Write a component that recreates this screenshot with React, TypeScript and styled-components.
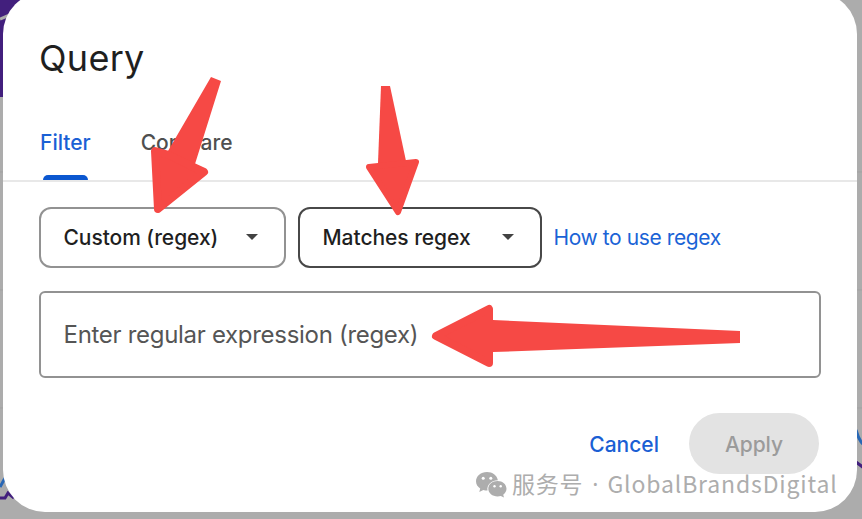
import React from "react";
import styled, { createGlobalStyle } from "styled-components";

const GlobalStyle = createGlobalStyle`
  * { box-sizing: border-box; }
  body { margin: 0; overflow: hidden; font-family: Inter, Roboto, sans-serif; }
  button { font-family: inherit; background: none; border: 0; padding: 0; margin: 0; }
`;

const Page = styled.div`
  position: relative;
  width: 862px;
  height: 519px;
  overflow: hidden;
  background: #acacac;
`;

const Overlay = styled.svg`
  position: absolute;
  inset: 0;
  pointer-events: none;
`;

const Dialog = styled.section`
  position: relative;
  width: 854px;
  height: 520px;
  margin: -8px 0 0 3px;
  padding-top: 44px;
  border-radius: 42px;
  background: #fff;
`;

const Title = styled.h1`
  margin: 0;
  padding-left: 36px;
  height: 44px;
  font-size: 36px;
  line-height: 44px;
  font-weight: 400;
  letter-spacing: 0.3px;
  color: #1f1f1f;
`;

const Tabs = styled.nav`
  display: flex;
  gap: 50px;
  height: 102px;
  padding: 47px 37px 0;
  border-bottom: 2px solid #e8e8e8;
`;

const Tab = styled.button<{ $active?: boolean }>`
  display: flex;
  flex-direction: column;
  align-items: center;
  justify-content: space-between;
  font-size: 21px;
  line-height: 32px;
  font-weight: 500;
  letter-spacing: ${(p) => (p.$active ? "0px" : "0px")};
  color: ${(p) => (p.$active ? "#1a60d5" : "#4f4f4f")};
  &::after {
    content: "";
    width: 45px;
    height: 5px;
    border-radius: 5px 5px 0 0;
    background: ${(p) => (p.$active ? "#0b57d0" : "transparent")};
  }
`;

const Filters = styled.div`
  display: flex;
  align-items: center;
  gap: 12px;
  padding: 24.500px 36px 0 35.500px;
`;

const Select = styled.button<{ $width: number; $strong?: boolean; $tracking: number }>`
  display: flex;
  align-items: center;
  justify-content: space-between;
  width: ${(p) => p.$width}px;
  height: 61.500px;
  padding: 0 26px 0 23px;
  border: 2px solid ${(p) => (p.$strong ? "#484848" : "#929292")};
  border-radius: 12px;
  font-size: 21px;
  font-weight: 500;
  white-space: nowrap;
  letter-spacing: ${(p) => p.$tracking}px;
  color: #1f1f1f;
`;

const HelpLink = styled.a`
  padding-top: 1px;
  font-size: 21px;
  line-height: 30px;
  letter-spacing: -0.4px;
  white-space: nowrap;
  color: #1a63d6;
`;

const Input = styled.input`
  display: block;
  width: 782px;
  height: 87px;
  margin: 23px 0 0 35.500px;
  padding: 0 23px;
  border: 2px solid #929292;
  border-radius: 6px;
  outline: 0;
  font: 400 24px Inter, sans-serif;
  letter-spacing: -0.3px;
  &::placeholder { color: #555; opacity: 1; }
`;

const Actions = styled.footer`
  display: flex;
  justify-content: flex-end;
  align-items: center;
  gap: 30px;
  padding: 35px 38px 0 0;
`;

const Action = styled.button<{ $filled?: boolean }>`
  height: 61px;
  width: ${(p) => (p.$filled ? "130px" : "auto")};
  border-radius: 31px;
  padding-top: 2px;
  background: ${(p) => (p.$filled ? "#e3e3e3" : "transparent")};
  color: ${(p) => (p.$filled ? "#9b9b9b" : "#1a5fd4")};
  font-size: 21px;
  font-weight: 500;
  letter-spacing: ${(p) => (p.$filled ? "-0.1px" : "0px")};
`;

const Watermark = styled.div`
  position: absolute;
  left: 476px;
  top: 470px;
  display: flex;
  align-items: center;
  height: 30px;
  color: #adadad;
  white-space: nowrap;
  font: 400 23px/30px "Noto Sans CJK SC", sans-serif;
`;

const Account = styled.span`
  margin: -4px 0 0 5px;
  letter-spacing: 0.8px;
`;

const Dot = styled.span`
  width: 24px;
  margin-top: -2px;
  text-align: center;
  font-family: "Noto Sans", sans-serif;
`;

const Brand = styled.span`
  margin-top: -4px;
  letter-spacing: 0.85px;
`;

const Caret = () => (
  <svg width="12" height="6" viewBox="0 0 12 6"><path d="M0 0h12L6 6z" fill="#424242" /></svg>
);

const ChatIcon = () => (
  <svg width="31" height="26" viewBox="0 0 31 26">
    <path fill="#adadad" d="M11 0C4.8 0 0 4.2 0 9.3c0 3 1.7 5.6 4.2 7.3L3.3 20l4-2.1c1.3.4 2.7.6 4.2.6-1-6 4.2-10.3 10.4-10.3C20.900 3.300 16.500 0 11 0Z" />
    <path fill="#adadad" d="M21.600 9c-5.200 0-9.300 3.400-9.300 7.700s4.100 7.700 9.300 7.700c1.100 0 2.200-.2 3.200-.5l3.200 1.700-.8-2.900c2-1.400 3.300-3.600 3.300-6 0-4.300-3.900-7.700-8.900-7.700Z" />
    <g fill="#fff">
      <circle cx="7.200" cy="6.300" r="1.500" /><circle cx="14.800" cy="6.300" r="1.500" />
      <circle cx="18.500" cy="14.300" r="1.200" /><circle cx="24.700" cy="14.300" r="1.200" />
    </g>
  </svg>
);

export default function App() {
  return (
    <Page>
      <GlobalStyle />
      <Overlay width="862" height="519" fill="none">
        <path d="M0 0H40V97H0Z" fill="#421f7d" />
        <path d="M0 19L12 14" stroke="#acacac" strokeWidth="3" />
        <path d="M0 172H862M0 290H862M0 408H862" stroke="#a1a1a1" />
        <path d="M0 487L5 478M856 430Q859 441 864 445" stroke="#2867b5" strokeWidth="3" />
        <path d="M0 498H5L8 493L14 498M856 462L864 468" stroke="#421f7d" strokeWidth="3" />
      </Overlay>
      <Dialog>
        <Title>Query</Title>
        <Tabs>
          <Tab $active>Filter</Tab>
          <Tab>Compare</Tab>
        </Tabs>
        <Filters>
          <Select $width={247} $tracking={-0.05}>Custom (regex)<Caret /></Select>
          <Select $width={244} $tracking={-0.05} $strong>Matches regex<Caret /></Select>
          <HelpLink>How to use regex</HelpLink>
        </Filters>
        <Input placeholder="Enter regular expression (regex)" />
        <Actions>
          <Action>Cancel</Action>
          <Action $filled>Apply</Action>
        </Actions>
      </Dialog>
      <Overlay width="862" height="519" fill="#f64945" stroke="#f64945" strokeLinejoin="round">
        <path stroke="none" d="M211 77L221 81L195 164L186 180L156 170L168 151Z" />
        <path strokeWidth="8" d="M155 151L158 209L204 172L191 166L169 155Z" />
        <path stroke="none" d="M381 86L390 86L406 161L397 180L378 163Z" />
        <path strokeWidth="6" d="M369 167L398 212L416 162Z" />
        <path stroke="none" d="M740 331V343L493 352L480 337L493 320Z" />
        <path strokeWidth="8" d="M436 336L489 309V363Z" />
      </Overlay>
      <Watermark>
        <ChatIcon />
        <Account>服务号</Account>
        <Dot>·</Dot>
        <Brand>GlobalBrandsDigital</Brand>
      </Watermark>
    </Page>
  );
}
